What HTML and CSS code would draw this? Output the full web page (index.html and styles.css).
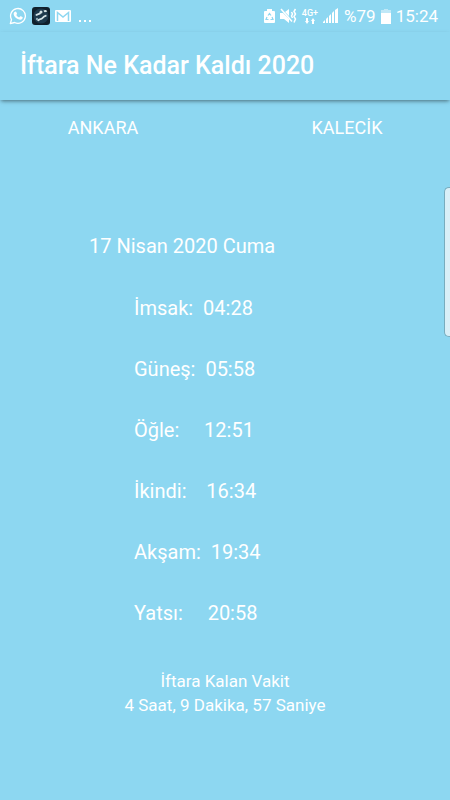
FILE: index.html
```html
<!DOCTYPE html>
<html lang="tr">
<head>
<meta charset="utf-8">
<meta name="viewport" content="width=device-width, initial-scale=1">
<title>İftara Ne Kadar Kaldı 2020</title>
<link rel="stylesheet" href="styles.css">
</head>
<body>
<div class="status">
  <div class="notices">
    <svg width="18" height="18" viewBox="0 0 18 18" fill="none" stroke="#fff">
      <path d="M1.3 16.7l1.2-4.2A7.4 7.4 0 1 1 5.600 15.500z" stroke-width="1.3" stroke-linejoin="round"/>
      <path d="M6.300 4.700c.5-.2.9 0 1.100.5l.6 1.400c.1.500-.3.900-.7 1.300.6 1.200 1.500 2 2.800 2.600l1-1.100c.3-.3.5-.2.800-.1l1.500.8c.5.300.3 1.300-.1 1.700-1.100 1.200-2.600 1.100-4.500.2-2-.9-3.600-2.700-4.100-4.600-.3-1.300.4-2.400 1.600-2.700z" fill="#fff" stroke="none"/>
    </svg>
    <svg width="18" height="18" viewBox="0 0 18 18" fill="none">
      <rect width="18" height="18" rx="3" fill="#10202c"/>
      <circle cx="9" cy="9" r="7.500" fill="#1d394c"/>
      <path d="M4 8.500c1-2 3-1 4.500-2.500M12 4.500c1-.8 2-.6 2.500.3M6 14c1-3 3-1 4.500-3s2-2 4-2.500" stroke="#d5e3e6" stroke-width="1.800"/>
      <circle cx="9" cy="5" r="1.500" fill="#d5e3e6"/>
      <circle cx="5" cy="12" r="1.200" fill="#8fa9b4"/>
    </svg>
    <svg class="mail" width="16" height="12" viewBox="0 0 16 12">
      <rect width="16" height="12" rx="1" fill="#fff"/>
      <path d="M2.500 11V2.500L8 7l5.500-4.500V11" fill="none" stroke="#8dd7f1" stroke-width="1.500"/>
    </svg>
    <svg width="13" height="18" viewBox="0 0 13 18" fill="#fff"><path d="M0 13h2v2H0zM5 13h2v2H5zM10 13h2v2h-2z"/></svg>
  </div>
  <div class="system">
    <svg width="11" height="16" viewBox="0 0 11 16">
      <path d="M3 1h5v2h2q1 0 1 1v10q0 1-1 1H1q-1 0-1-1V4q0-1 1-1h2z" fill="#fff"/>
      <path d="M4 7.500L5.500 5.500 7 7.500M8 9l1 2.500H6.500M4.500 11.500H2L3 9" fill="none" stroke="#8dd7f1" stroke-width="1.200"/>
    </svg>
    <svg width="17" height="16" viewBox="0 0 17 16">
      <path d="M0 5h3l6 6v4l-5-4H0zM5 4l4-3v7z" fill="#fff"/>
      <path d="M1 1l11 12.500" stroke="#fff" stroke-width="1.500"/>
      <path d="M11.500 4l1 2-1 2 1 2M15.500 1L14 3.500 15.500 6 14 8.500l1.500 2.500-1.500 3.500" fill="none" stroke="#fff" stroke-width="1.500"/>
    </svg>
    <div class="network">
      <span>4G+</span>
      <svg width="10" height="6" viewBox="0 0 10 6" fill="#fff"><path d="M1 0h2v3h1L2 6 0 3h1zM7 6h2V3h1L8 0 6 3h1z"/></svg>
    </div>
    <svg width="16" height="16" viewBox="0 0 16 16" fill="#fff"><path d="M0 14l2-2v3H0zM3 11l2-2v6H3zM6 8l2-2v9H6zM9 5l2-2v12H9zM12 2l3-2v15h-3z"/></svg>
    <span class="percent">%79</span>
    <svg width="10" height="15" viewBox="0 0 10 15"><path d="M3 0h4v1h3v4H0V1h3z" fill="#c0e8f7"/><path d="M0 4h10v11H0z" fill="#fff"/></svg>
    <time class="clock">15:24</time>
  </div>
</div>
<header class="bar"><h1>İftara Ne Kadar Kaldı 2020</h1></header>
<main>
  <div class="places">
    <button type="button">ANKARA</button>
    <button type="button">KALECİK</button>
  </div>
  <h2 class="date">17 Nisan 2020 Cuma</h2>
  <ul class="times">
    <li>İmsak:  04:28</li>
    <li>Güneş:  05:58</li>
    <li>Öğle:     12:51</li>
    <li>İkindi:    16:34</li>
    <li>Akşam:  19:34</li>
    <li>Yatsı:     20:58</li>
  </ul>
  <p class="remaining">İftara Kalan Vakit<br>4 Saat, 9 Dakika, 57 Saniye</p>
</main>
<div class="edge"></div>
</body>
</html>
```
FILE: styles.css
```css
* { box-sizing: border-box; }
body {
  margin: 0;
  min-height: 100vh;
  background: #8dd7f1;
  color: #fff;
  font-family: Roboto, "Liberation Sans", sans-serif;
}
svg { display: block; flex: none; }
.status {
  display: flex;
  justify-content: space-between;
  height: 32px;
  padding: 0 12px 0 9px;
}
.notices, .system { display: flex; align-items: center; gap: 5px; }
.mail { margin-right: 3px; }
.network {
  display: flex;
  flex-direction: column;
  align-items: center;
  gap: 1px;
  font-size: 9px;
  font-weight: 500;
  line-height: 8px;
}
.percent, .clock { font-size: 17px; line-height: 32px; }
.bar {
  display: flex;
  align-items: center;
  height: 68px;
  padding: 0 20px;
  box-shadow: 0 2px 4px -1px rgba(0, 0, 0, .5);
}
h1 {
  margin: 0;
  font-size: 25px;
  font-weight: 500;
  line-height: 32px;
}
.places {
  display: grid;
  grid-template-columns: 1fr 1fr;
  gap: 38px;
  padding-top: 16px;
}
.places button {
  border: 0;
  padding: 0;
  background: none;
  color: inherit;
  font: inherit;
  font-size: 18px;
  line-height: 24px;
}
.date {
  margin: 90px 0 0 89px;
  font-size: 20px;
  font-weight: 400;
  line-height: 32px;
}
.times {
  display: grid;
  gap: 29px;
  margin: 30px 0 0;
  padding: 0 0 0 134px;
  list-style: none;
  font-size: 20px;
  line-height: 32px;
  white-space: pre;
}
.remaining {
  margin: 40px 0 0;
  font-size: 17px;
  line-height: 24px;
  text-align: center;
}
.edge {
  position: absolute;
  top: 187px;
  right: 0;
  width: 6px;
  height: 150px;
  border: 1px solid #78acbe;
  border-right: 0;
  border-radius: 5px 0 0 5px;
  background: #d8eff8;
}
```
